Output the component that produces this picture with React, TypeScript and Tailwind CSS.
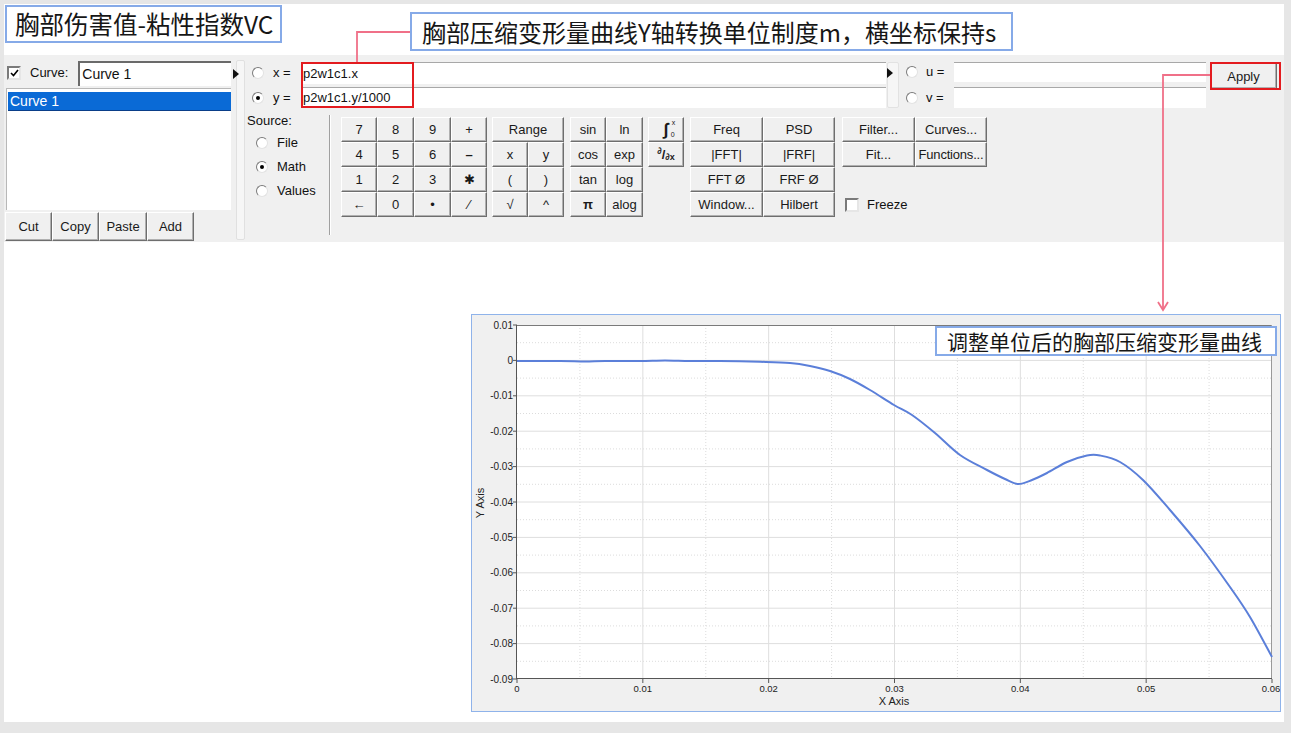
import React from 'react';

/**
 * A slide: the curve-math dialog of a CAE post-processor with callouts on it,
 * and the resulting chest-deflection plot below.
 */

const CJK = "font-['Noto_Sans_CJK_SC','Noto_Sans',sans-serif]";
const UI = "font-['Liberation_Sans','Arial',sans-serif]";

const btnBase =
  'flex items-center justify-center bg-[#f0f0f0] border border-t-white border-l-white border-r-[#6e6e6e] border-b-[#6e6e6e] shadow-[inset_-1px_-1px_0_#b0b0b0] text-[13px] text-[#1a1a1a] leading-none';

function Btn({ children, className = '' }: { children: React.ReactNode; className?: string }) {
  return <div className={`${btnBase} ${className}`}>{children}</div>;
}

function Radio({ checked, className = '' }: { checked?: boolean; className?: string }) {
  return (
    <span
      className={`relative shrink-0 w-[12px] h-[12px] rounded-full bg-white border border-t-[#7a7a7a] border-l-[#7a7a7a] border-r-[#e2e2e2] border-b-[#e2e2e2] ${className}`}
    >
      {checked && <span className="absolute left-[3px] top-[3px] w-[4px] h-[4px] rounded-full bg-black" />}
    </span>
  );
}

function Check({ checked, className = '' }: { checked?: boolean; className?: string }) {
  return (
    <span
      className={`flex items-center justify-center shrink-0 w-[14px] h-[14px] bg-white border-2 border-t-[#7a7a7a] border-l-[#7a7a7a] border-r-[#e6e6e6] border-b-[#e6e6e6] ${className}`}
    >
      {checked && (
        <svg width="9" height="8" viewBox="0 0 9 8">
          <path d="M1 4 L3.5 6.5 L8 1" stroke="#000" strokeWidth="1.6" fill="none" />
        </svg>
      )}
    </span>
  );
}

function Tri({ className = '' }: { className?: string }) {
  return (
    <svg width="6" height="10" viewBox="0 0 6 10" className={className}>
      <path d="M0 0 L6 5 L0 10 Z" fill="#111" />
    </svg>
  );
}

function Field({ children, className = '' }: { children?: React.ReactNode; className?: string }) {
  return (
    <div className={`bg-white border-t border-t-[#a8a8a8] flex items-center pl-[2px] text-[13px] ${className}`}>
      {children}
    </div>
  );
}

// ---------- chart ----------
const X0 = 517, X1 = 1272, Y0 = 325, Y1 = 679;
const px = (x: number) => X0 + (x / 0.06) * (X1 - X0);
const py = (y: number) => Y0 + ((0.01 - y) / 0.1) * (Y1 - Y0);

const curve: [number, number][] = [
  [517, 361], [560, 361], [585, 361.6], [605, 361], [640, 361], [665, 360.5], [690, 361],
  [720, 361], [760, 361.8], [790, 363], [810, 366], [830, 371], [850, 379], [870, 390],
  [894, 405], [912, 415], [935, 433], [960, 455], [987, 470], [1005, 479], [1018, 484],
  [1032, 480], [1047, 473], [1067, 462], [1087, 455.5], [1100, 455.5], [1120, 462],
  [1143, 480], [1170, 510], [1200, 546], [1230, 587], [1250, 617], [1272, 657],
];

function smooth(pts: [number, number][]) {
  let d = `M${pts[0][0]} ${pts[0][1]}`;
  for (let i = 0; i < pts.length - 1; i++) {
    const p0 = pts[i - 1] || pts[i];
    const p1 = pts[i];
    const p2 = pts[i + 1];
    const p3 = pts[i + 2] || p2;
    const c1 = [p1[0] + (p2[0] - p0[0]) / 6, p1[1] + (p2[1] - p0[1]) / 6];
    const c2 = [p2[0] - (p3[0] - p1[0]) / 6, p2[1] - (p3[1] - p1[1]) / 6];
    d += ` C${c1[0]} ${c1[1]} ${c2[0]} ${c2[1]} ${p2[0]} ${p2[1]}`;
  }
  return d;
}

function Chart() {
  const yMajor = Array.from({ length: 11 }, (_, i) => i);
  const xMajor = Array.from({ length: 7 }, (_, i) => i);
  return (
    <svg width={808} height={396} className="block">
      <g transform="translate(-472 -315)" fontFamily="Liberation Sans, Arial, sans-serif">
        <rect x={X0} y={Y0} width={X1 - X0} height={Y1 - Y0} fill="#fff" />
        {/* minor grid */}
        {yMajor.slice(0, 10).map((i) => (
          <line key={`ym${i}`} x1={X0} x2={X1} y1={py((1 - i - 0.5) / 100)} y2={py((1 - i - 0.5) / 100)} stroke="#dcdcdc" strokeDasharray="1 2" />
        ))}
        {xMajor.slice(0, 6).map((i) => (
          <line key={`xm${i}`} y1={Y0} y2={Y1} x1={px((i + 0.5) / 100)} x2={px((i + 0.5) / 100)} stroke="#dcdcdc" strokeDasharray="1 2" />
        ))}
        {/* major grid */}
        {yMajor.slice(1, 10).map((i) => (
          <line key={`yg${i}`} x1={X0} x2={X1} y1={py((1 - i) / 100)} y2={py((1 - i) / 100)} stroke="#dedede" />
        ))}
        {xMajor.slice(1, 6).map((i) => (
          <line key={`xg${i}`} y1={Y0} y2={Y1} x1={px(i / 100)} x2={px(i / 100)} stroke="#dedede" />
        ))}
        {/* frame */}
        <line x1={X0} x2={X1} y1={Y0 + 0.5} y2={Y0 + 0.5} stroke="#7a7a7a" />
        <line x1={X1 - 0.5} x2={X1 - 0.5} y1={Y0} y2={Y1} stroke="#9a9a9a" />
        <line x1={X0 - 0.5} x2={X0 - 0.5} y1={Y0} y2={Y1} stroke="#555" />
        <line x1={X0} x2={X1} y1={Y1 - 0.5} y2={Y1 - 0.5} stroke="#555" />
        {/* ticks + labels */}
        {yMajor.map((i) => {
          const y = py((1 - i) / 100);
          const label = i === 1 ? '0' : ((1 - i) / 100).toFixed(2);
          return (
            <g key={`yl${i}`}>
              <line x1={X0 - 4} x2={X0} y1={y} y2={y} stroke="#555" />
              <text x={X0 - 4} y={y + 3.5} fontSize="10" textAnchor="end" fill="#222">{label}</text>
            </g>
          );
        })}
        {xMajor.map((i) => {
          const x = px(i / 100);
          const label = i === 0 ? '0' : (i / 100).toFixed(2);
          return (
            <g key={`xl${i}`}>
              <line x1={x} x2={x} y1={Y1} y2={Y1 + 4} stroke="#555" />
              <text x={i === 6 ? x - 1 : x} y={Y1 + 13} fontSize="9.5" textAnchor="middle" fill="#222">{label}</text>
            </g>
          );
        })}
        <text x={894} y={705} fontSize="11" textAnchor="middle" fill="#222">X Axis</text>
        <text x={0} y={0} fontSize="11" textAnchor="middle" fill="#222" transform="translate(484 503) rotate(-90)">Y Axis</text>
        <path d={smooth(curve)} fill="none" stroke="#5b7fd9" strokeWidth="2" />
      </g>
    </svg>
  );
}

// ---------- dialog ----------
function Keypad() {
  const keys = ['7', '8', '9', '+', '4', '5', '6', '–', '1', '2', '3', '✱', '←', '0', '•', '∕'];
  return (
    <div className="grid grid-cols-[36px_37px_37px_36px] auto-rows-[25px]">
      {keys.map((k, i) => (
        <Btn key={i} className={k === '✱' ? 'text-[10px]' : k === '–' ? 'font-bold' : ''}>{k}</Btn>
      ))}
    </div>
  );
}

export default function App() {
  return (
    <div className="w-[1291px] h-[733px] bg-[#e6e6e6] p-[4px] overflow-hidden">
      <div className="relative w-[1280px] h-[718px] bg-white">
        {/* title row */}
        <div className={`flex items-start h-[51px] ${CJK} text-[#161616]`}>
          <div className="mt-[1px] ml-[1px] w-[277px] h-[38px] border-2 border-[#86aae8] flex items-center pl-[8px] text-[24.5px] leading-none">
            胸部伤害值-粘性指数VC
          </div>
          <div className="ml-[128px] mt-[8px] w-[603px] h-[39px] border-2 border-[#86aae8] flex items-center pl-[10px] text-[24px] leading-none whitespace-nowrap">
            胸部压缩变形量曲线Y轴转换单位制度m，横坐标保持s
          </div>
        </div>

        {/* curve math dialog */}
        <div className={`h-[187px] bg-[#f0f0f0] flex ${UI} text-[13px] text-[#111]`}>
          {/* curve list */}
          <div className="w-[226px] ml-[2px] pt-[5px] flex flex-col">
            <div className="h-[26px] flex items-center">
              <Check checked className="ml-[1px]" />
              <span className="ml-[9px]">Curve:</span>
              <div className="ml-[10px] w-[153px] h-[25px] bg-white border-t-2 border-l-2 border-t-[#6a6a6a] border-l-[#6a6a6a] flex items-center pl-[2px] text-[14px]">
                Curve 1
              </div>
            </div>
            <div className="mt-[2px] w-[225px] h-[122px] bg-white border-t border-l border-[#b8b8b8] pt-[3px] pl-[1px]">
              <div className="w-[223px] h-[19px] bg-[#0a6ad6] border-b border-[#0a3e88] text-white text-[14px] flex items-center pl-[2px]">
                Curve 1
              </div>
            </div>
            <div className="mt-[2px] flex h-[29px] -ml-[1px]">
              <Btn className="w-[47px]">Cut</Btn>
              <Btn className="w-[47px]">Copy</Btn>
              <Btn className="w-[48px]">Paste</Btn>
              <Btn className="w-[47px]">Add</Btn>
            </div>
          </div>

          {/* splitter */}
          <div className="w-[9px] mt-[5px] mb-[2px] ml-[4px] rounded-[2px] bg-[#f6f6f6] border border-[#e0e0e0] relative">
            <Tri className="absolute left-[-4px] top-[8px]" />
          </div>

          {/* expression area */}
          <div className="flex-1 flex flex-col">
            <div className="flex pt-[7px]">
              <div className="w-[641px] flex flex-col">
                <div className="h-[22px] flex items-center">
                  <Radio className="ml-[7px]" />
                  <span className="ml-[9px] w-[28px]">x =</span>
                  <Field className="flex-1 h-[22px]">p2w1c1.x</Field>
                </div>
                <div className="h-[21px] mt-[3px] flex items-center">
                  <Radio checked className="ml-[7px]" />
                  <span className="ml-[9px] w-[28px]">y =</span>
                  <Field className="flex-1 h-[21px]">p2w1c1.y/1000</Field>
                </div>
              </div>
              <div className="w-[12px] h-[46px] ml-[1px] bg-[#f6f6f6] border border-[#e2e2e2] rounded-[2px] relative">
                <Tri className="absolute left-[-1px] top-[5px]" />
              </div>
              <div className="w-[307px] flex flex-col">
                <div className="h-[20px] flex items-center">
                  <Radio className="ml-[7px]" />
                  <span className="ml-[8px] w-[28px]">u =</span>
                  <Field className="w-[252px] h-[20px]" />
                </div>
                <div className="h-[21px] mt-[5px] flex items-center">
                  <Radio className="ml-[7px]" />
                  <span className="ml-[8px] w-[28px]">v =</span>
                  <Field className="w-[252px] h-[21px]" />
                </div>
              </div>
              <Btn className="ml-[4px] mt-[1px] w-[67px] h-[26px]">Apply</Btn>
            </div>

            <div className="flex mt-[7px]">
              {/* source */}
              <div className="w-[84px] pl-[2px] flex flex-col">
                <span className="h-[12px] leading-[12px]">Source:</span>
                <div className="mt-[4px] flex flex-col">
                  {[
                    ['File', false],
                    ['Math', true],
                    ['Values', false],
                  ].map(([l, c]) => (
                    <div key={l as string} className="h-[24px] flex items-center">
                      <Radio checked={c as boolean} className="ml-[9px]" />
                      <span className="ml-[9px]">{l as string}</span>
                    </div>
                  ))}
                </div>
              </div>
              <div className="w-[2px] h-[120px] border-l border-l-[#a0a0a0] border-r border-r-white" />

              {/* button groups */}
              <div className="ml-[10px] mt-[2px] flex items-start">
                <Keypad />
                <div className="ml-[5px] grid grid-cols-[36px_36px] auto-rows-[25px] w-[72px]">
                  <Btn className="col-span-2">Range</Btn>
                  <Btn>x</Btn>
                  <Btn>y</Btn>
                  <Btn>(</Btn>
                  <Btn>)</Btn>
                  <Btn>√</Btn>
                  <Btn>^</Btn>
                </div>
                <div className="ml-[6px] grid grid-cols-[36px_37px] auto-rows-[25px]">
                  <Btn>sin</Btn>
                  <Btn>ln</Btn>
                  <Btn>cos</Btn>
                  <Btn>exp</Btn>
                  <Btn>tan</Btn>
                  <Btn>log</Btn>
                  <Btn className="font-bold">π</Btn>
                  <Btn>alog</Btn>
                </div>
                <div className="ml-[5px] grid grid-cols-[36px] auto-rows-[25px]">
                  <Btn>
                    <span className="relative font-bold text-[17px] leading-none">
                      ∫
                      <span className="absolute left-[8px] top-[-2px] text-[7px] font-normal">x</span>
                      <span className="absolute left-[7px] top-[10px] text-[7px] font-normal">0</span>
                    </span>
                  </Btn>
                  <Btn className="font-bold text-[11px]">
                    <span className="relative top-[-3px] text-[9px]">∂</span>
                    <span>/</span>
                    <span className="relative top-[3px] text-[9px]">∂x</span>
                  </Btn>
                </div>
                <div className="ml-[6px] grid grid-cols-[73px_72px] auto-rows-[25px]">
                  <Btn>Freq</Btn>
                  <Btn>PSD</Btn>
                  <Btn>|FFT|</Btn>
                  <Btn>|FRF|</Btn>
                  <Btn>FFT Ø</Btn>
                  <Btn>FRF Ø</Btn>
                  <Btn>Window...</Btn>
                  <Btn>Hilbert</Btn>
                </div>
                <div className="ml-[7px] flex flex-col">
                  <div className="grid grid-cols-[73px_72px] auto-rows-[25px]">
                    <Btn>Filter...</Btn>
                    <Btn>Curves...</Btn>
                    <Btn>Fit...</Btn>
                    <Btn className="text-[12.5px] tracking-[-0.2px]">Functions...</Btn>
                  </div>
                  <div className="mt-[28px] flex items-center">
                    <Check className="ml-[3px]" />
                    <span className="ml-[8px]">Freeze</span>
                  </div>
                </div>
              </div>
            </div>
          </div>
        </div>

        {/* result plot */}
        <div className="relative mt-[72px] ml-[467px] w-[810px] h-[398px] border border-[#8fb3ea] bg-[#f0f0f0]">
          <Chart />
          <div
            className={`absolute left-[463px] top-[11px] w-[342px] h-[30px] border-2 border-[#86aae8] bg-white flex items-center pl-[10px] text-[21px] leading-none text-[#161616] ${CJK}`}
          >
            调整单位后的胸部压缩变形量曲线
          </div>
        </div>

        {/* callout marks */}
        <div className="absolute left-[297px] top-[58px] w-[113px] h-[46px] border-2 border-[#e31b1f]" />
        <div className="absolute left-[1206px] top-[58px] w-[71px] h-[28px] border-2 border-[#e31b1f]" />
        <svg className="absolute inset-0 pointer-events-none" width={1280} height={718}>
          <g transform="translate(-4 -4)" stroke="#f07088" strokeWidth="1.8" fill="none">
            <path d="M410 32 H357 V62" />
            <path d="M1210 75 H1163 V310" />
            <path d="M1158 302 L1163 310 L1168 302" />
          </g>
        </svg>
      </div>
    </div>
  );
}
